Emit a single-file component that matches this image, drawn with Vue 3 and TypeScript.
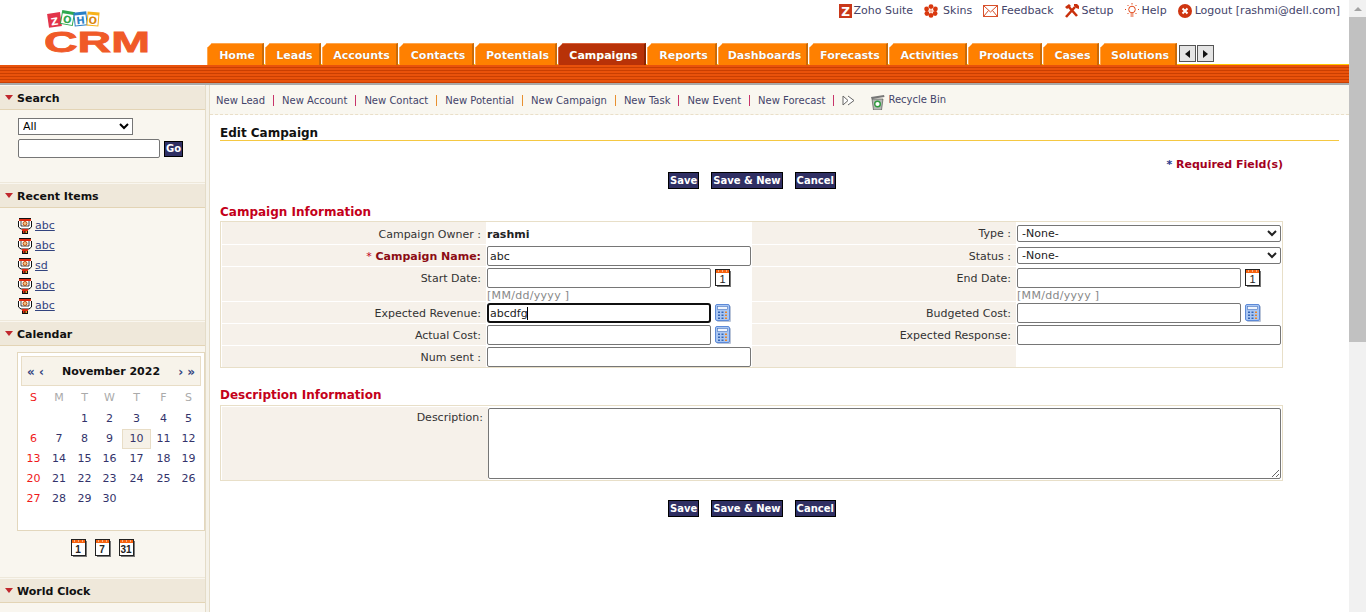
<script setup lang="ts">
interface Tab {
    label: string;
    width: number;
    active?: boolean;
}

const tabs: Tab[] = [
    { label: "Home", width: 57 },
    { label: "Leads", width: 56 },
    { label: "Accounts", width: 76 },
    { label: "Contacts", width: 75 },
    { label: "Potentials", width: 82 },
    { label: "Campaigns", width: 88, active: true },
    { label: "Reports", width: 70 },
    { label: "Dashboards", width: 90 },
    { label: "Forecasts", width: 79 },
    { label: "Activities", width: 78 },
    { label: "Products", width: 74 },
    { label: "Cases", width: 56 },
    { label: "Solutions", width: 77 },
];

const quickLinks = [
    "New Lead",
    "New Account",
    "New Contact",
    "New Potential",
    "New Campaign",
    "New Task",
    "New Event",
    "New Forecast",
];

const recentItems = ["abc", "abc", "sd", "abc", "abc"];
const weekDays = ["S", "M", "T", "W", "T", "F", "S"];
const blanks = [0, 1];
const days = Array.from({ length: 30 }, (_, i) => i + 1);

// november 2022: the 6th is the first sunday
const isSunday = (day: number) => day % 7 === 6;
</script>

<template>
    <div class="page">
        <svg class="sprites" width="0" height="0" aria-hidden="true">
            <symbol id="cal" viewBox="0 0 16 18">
                <rect x="2" y="2" width="14" height="16" fill="#777" />
                <rect x="0.5" y="0.5" width="14" height="16" fill="#fff" stroke="#222" />
                <rect x="1" y="1" width="13" height="3" fill="#f5620f" />
                <path d="M3 2h1M7 2h1M11 2h1" stroke="#fff" />
            </symbol>
            <symbol id="calc" viewBox="0 0 16 18">
                <rect x="2" y="2" width="14" height="16" rx="1" fill="#b9c4d8" />
                <rect x="0.5" y="0.5" width="14" height="16" rx="1.5" fill="#a9c6f2" stroke="#5d8ad8" />
                <rect x="2.5" y="2.5" width="10" height="3" fill="#f0f5fd" stroke="#4a74bc" stroke-width="0.6" />
                <g fill="#3564b4">
                    <rect x="3" y="7.5" width="2" height="1.5" />
                    <rect x="6.500" y="7.5" width="2" height="1.5" />
                    <rect x="10" y="7.5" width="2" height="1.5" fill="#e8862a" />
                    <rect x="3" y="10.500" width="2" height="1.5" />
                    <rect x="6.500" y="10.500" width="2" height="1.5" />
                    <rect x="10" y="10.500" width="2" height="1.5" fill="#e8862a" />
                    <rect x="3" y="13.500" width="2" height="1.5" />
                    <rect x="6.500" y="13.500" width="2" height="1.5" />
                    <rect x="10" y="13.500" width="2" height="1.5" fill="#e8862a" />
                </g>
            </symbol>
            <symbol id="campaign" viewBox="0 0 14 16">
                <rect x="1" y="0" width="12" height="1" fill="#111" />
                <rect x="1" y="1" width="12" height="2" fill="#e02a10" />
                <path d="M.5 3v6l2.500 2h8l2.500-2V3" fill="#fff" stroke="#111" />
                <path d="M3 3v5h8V3" fill="#fff" stroke="#111" stroke-width="0.8" />
                <circle cx="7" cy="5.500" r="2" fill="#f3c48a" stroke="#b8500c" stroke-width="1" />
                <rect x="4" y="11" width="6" height="2" fill="#e02a10" />
                <rect x="4" y="13" width="6" height="3" fill="#111" />
                <rect x="5" y="13" width="1.5" height="2" fill="#e02a10" />
                <rect x="7.5" y="13" width="1.5" height="2" fill="#e8a020" />
            </symbol>
        </svg>

        <div class="window">
            <header class="header">
                <div class="logo">
                    <svg width="110" height="65" viewBox="0 0 110 65">
                        <g class="cube-text" text-anchor="middle">
                            <g transform="rotate(-8 9 20)">
                                <rect x="3" y="13" width="13" height="14" fill="#e2344a" />
                                <text x="9.500" y="25" fill="#fff">Z</text>
                            </g>
                            <g transform="rotate(10 22 18)">
                                <rect x="16" y="11" width="13" height="14" fill="#2fa84f" />
                                <rect x="17" y="14" width="11" height="10" fill="#fff" />
                                <text x="22.500" y="23" fill="#2fa84f">O</text>
                            </g>
                            <g transform="rotate(-6 35 19)">
                                <rect x="29" y="12" width="13" height="14" fill="#2a7fc6" />
                                <rect x="30" y="15" width="11" height="10" fill="#fff" />
                                <text x="35.500" y="24" fill="#2a7fc6">H</text>
                            </g>
                            <g transform="rotate(5 48 19)">
                                <rect x="42" y="12" width="12" height="14" fill="#f7b21c" />
                                <rect x="43" y="15" width="10" height="10" fill="#fff" />
                                <text x="48" y="24" fill="#d9860c">O</text>
                            </g>
                        </g>
                        <text
                            class="crm-text"
                            x="-1"
                            y="52"
                            textLength="106"
                            lengthAdjust="spacingAndGlyphs"
                        >CRM</text>
                    </svg>
                </div>
                <div class="header-right">
                    <nav class="top-links">
                        <a class="top-link top-link--suite">
                            <svg width="13" height="14" viewBox="0 0 13 14">
                                <rect width="13" height="14" fill="#c9381a" />
                                <text class="suite-z" x="6.5" y="12" text-anchor="middle">Z</text>
                            </svg>
                            Zoho Suite
                        </a>
                        <a class="top-link top-link--skins">
                            <svg width="14" height="14" viewBox="0 0 14 14">
                                <g fill="#d9380e">
                                    <circle cx="7" cy="2.6" r="2.4" />
                                    <circle cx="7" cy="11.4" r="2.4" />
                                    <circle cx="2.6" cy="5" r="2.4" />
                                    <circle cx="11.4" cy="5" r="2.4" />
                                    <circle cx="2.9" cy="9.5" r="2.4" />
                                    <circle cx="11.1" cy="9.5" r="2.4" />
                                </g>
                                <circle cx="7" cy="7" r="1.7" fill="#f6b49a" />
                            </svg>
                            Skins
                        </a>
                        <a class="top-link">
                            <svg width="15" height="12" viewBox="0 0 15 12">
                                <rect x="0.5" y="0.5" width="14" height="11" fill="#fff" stroke="#d8502a" />
                                <path d="M1 1l6.5 6L14 1M1 11l4.5-5.5M14 11L9.500 5.500" fill="none" stroke="#d8502a" />
                            </svg>
                            Feedback
                        </a>
                        <a class="top-link">
                            <svg width="14" height="14" viewBox="0 0 14 14">
                                <path d="M1 13L10 3M3 2l9 10" stroke="#c9300c" stroke-width="2.600" fill="none" />
                                <path d="M0 3l4-3 2 2-4 3zM9 0h3l2 2v3l-3-1-2-2z" fill="#c9300c" />
                            </svg>
                            Setup
                        </a>
                        <a class="top-link">
                            <svg width="14" height="16" viewBox="0 0 14 16">
                                <circle cx="7" cy="6.500" r="3.300" fill="#fff" stroke="#e2491a" />
                                <path d="M5.500 11h3M5.500 13h3M7 0v1.500M1 6.500H0M14 6.500h-1M2.500 2l1 1M11.500 2l-1 1M2.500 11l1-1M11.500 11l-1-1" stroke="#e2491a" fill="none" />
                            </svg>
                            Help
                        </a>
                        <a class="top-link">
                            <svg width="14" height="14" viewBox="0 0 14 14">
                                <circle cx="7" cy="7" r="7" fill="#cf3510" />
                                <path d="M4.500 4.500l5 5M9.500 4.500l-5 5" stroke="#fff" stroke-width="2" />
                            </svg>
                            Logout [rashmi@dell.com]
                        </a>
                    </nav>
                    <div class="tabs">
                        <a
                            v-for="tab in tabs"
                            :key="tab.label"
                            class="tab"
                            :class="{ 'tab--active': tab.active }"
                            :style="{ width: tab.width + 'px' }"
                        >{{ tab.label }}</a>
                        <span class="tab-arrow tab-arrow--first"><i class="tri tri--left"></i></span>
                        <span class="tab-arrow"><i class="tri tri--right"></i></span>
                    </div>
                </div>
            </header>
            <div class="stripe"></div>

            <div class="body">
                <aside class="sidebar">
                    <section class="side-section">
                        <h3 class="side-head"><i class="caret"></i>Search</h3>
                        <div class="search-body">
                            <select class="search-select"><option>All</option></select>
                            <div class="search-row">
                                <input class="search-input" type="text" />
                                <button class="btn btn--go">Go</button>
                            </div>
                        </div>
                    </section>

                    <section class="side-section">
                        <h3 class="side-head"><i class="caret"></i>Recent Items</h3>
                        <ul class="recent">
                            <li v-for="(item, i) in recentItems" :key="i" class="recent-item">
                                <svg width="14" height="16"><use href="#campaign" /></svg>
                                <a class="recent-link">{{ item }}</a>
                            </li>
                        </ul>
                    </section>

                    <section class="side-section">
                        <h3 class="side-head"><i class="caret"></i>Calendar</h3>
                        <div class="cal-wrap">
                            <div class="cal">
                                <div class="cal-title">
                                    <span class="cal-nav">« ‹</span>
                                    <b class="cal-month">November 2022</b>
                                    <span class="cal-nav">› »</span>
                                </div>
                                <div class="cal-grid">
                                    <span
                                        v-for="(d, i) in weekDays"
                                        :key="'w' + i"
                                        class="cal-week"
                                        :class="{ 'cal-week--sun': i === 0 }"
                                    >{{ d }}</span>
                                    <span v-for="b in blanks" :key="'b' + b"></span>
                                    <span
                                        v-for="day in days"
                                        :key="day"
                                        class="cal-day"
                                        :class="{ 'cal-day--sun': isSunday(day), 'cal-day--today': day === 10 }"
                                    >{{ day }}</span>
                                </div>
                            </div>
                            <div class="cal-views">
                                <span v-for="n in [1, 7, 31]" :key="n" class="cal-icon cal-icon--view">
                                    <svg width="16" height="18"><use href="#cal" /></svg>
                                    <em>{{ n }}</em>
                                </span>
                            </div>
                        </div>
                    </section>

                    <section class="side-section side-section--last">
                        <h3 class="side-head"><i class="caret"></i>World Clock</h3>
                    </section>
                </aside>
                <div class="rule"></div>

                <main class="main">
                    <nav class="quick">
                        <template v-for="(link, i) in quickLinks" :key="link">
                            <a class="quick-link">{{ link }}</a>
                            <i class="quick-sep" :class="{ 'quick-sep--warm': i > 1 && i < 5 }"></i>
                        </template>
                        <svg class="quick-more" width="13" height="11" viewBox="0 0 13 11">
                            <path d="M1 1l5 4.500-5 4.500zM6 1l6 4.500-6 4.500" fill="#fff" stroke="#666" />
                        </svg>
                        <svg class="quick-bin" width="15" height="16" viewBox="0 0 15 16">
                            <path d="M1 3l13-2 .5 2-13 2z" fill="#777" />
                            <path d="M2 5h11l-1.500 11h-8z" fill="#b4b8b4" stroke="#444" stroke-width="0.600" />
                            <circle cx="7.500" cy="10" r="2.800" fill="#fff" stroke="#2e9a3c" stroke-width="1.400" />
                        </svg>
                        <a class="quick-link quick-link--bin">Recycle Bin</a>
                    </nav>

                    <div class="content">
                        <h2 class="title">Edit Campaign</h2>
                        <div class="required"><span class="req-star">*</span> Required Field(s)</div>
                        <div class="actions">
                            <button class="btn">Save</button>
                            <button class="btn">Save &amp; New</button>
                            <button class="btn">Cancel</button>
                        </div>

                        <h3 class="block-head">Campaign Information</h3>
                        <div class="form-table">
                            <label class="cell-label cell-label--owner">Campaign Owner :</label>
                            <div class="cell-value cell-value--owner"><b>rashmi</b></div>
                            <label class="cell-label">Type :</label>
                            <div class="cell-value cell-value--type"><select class="field"><option>-None-</option></select></div>

                            <label class="cell-label cell-label--required"><span>*</span> Campaign Name:</label>
                            <div class="cell-value"><input class="field" type="text" value="abc" /></div>
                            <label class="cell-label">Status :</label>
                            <div class="cell-value cell-value--status"><select class="field"><option>-None-</option></select></div>

                            <label class="cell-label">Start Date:</label>
                            <div class="cell-value">
                                <div class="with-icon">
                                    <input class="field field--short" type="text" />
                                    <span class="cal-icon">
                                        <svg width="16" height="18"><use href="#cal" /></svg>
                                        <em>1</em>
                                    </span>
                                </div>
                                <div class="hint">[MM/dd/yyyy ]</div>
                            </div>
                            <label class="cell-label">End Date:</label>
                            <div class="cell-value">
                                <div class="with-icon">
                                    <input class="field field--short" type="text" />
                                    <span class="cal-icon">
                                        <svg width="16" height="18"><use href="#cal" /></svg>
                                        <em>1</em>
                                    </span>
                                </div>
                                <div class="hint">[MM/dd/yyyy ]</div>
                            </div>

                            <label class="cell-label">Expected Revenue:</label>
                            <div class="cell-value">
                                <div class="with-icon">
                                    <span class="focus-wrap">
                                        <input class="field field--short field--focus" type="text" value="abcdfg" />
                                        <i class="text-caret"></i>
                                    </span>
                                    <svg width="16" height="18"><use href="#calc" /></svg>
                                </div>
                            </div>
                            <label class="cell-label">Budgeted Cost:</label>
                            <div class="cell-value">
                                <div class="with-icon">
                                    <input class="field field--short" type="text" />
                                    <svg width="16" height="18"><use href="#calc" /></svg>
                                </div>
                            </div>

                            <label class="cell-label">Actual Cost:</label>
                            <div class="cell-value">
                                <div class="with-icon">
                                    <input class="field field--short" type="text" />
                                    <svg width="16" height="18"><use href="#calc" /></svg>
                                </div>
                            </div>
                            <label class="cell-label">Expected Response:</label>
                            <div class="cell-value"><input class="field" type="text" /></div>

                            <label class="cell-label">Num sent :</label>
                            <div class="cell-value"><input class="field" type="text" /></div>
                            <div class="cell-label"></div>
                            <div class="cell-value"></div>
                        </div>

                        <h3 class="block-head block-head--desc">Description Information</h3>
                        <div class="desc-table">
                            <label class="cell-label cell-label--desc">Description:</label>
                            <div class="desc-value"><textarea class="desc-area"></textarea></div>
                        </div>

                        <div class="actions actions--bottom">
                            <button class="btn">Save</button>
                            <button class="btn">Save &amp; New</button>
                            <button class="btn">Cancel</button>
                        </div>
                    </div>
                </main>
            </div>
        </div>

        <div class="scrollbar">
            <div class="scroll-btn"><i class="scroll-up"></i></div>
            <div class="scroll-thumb"></div>
        </div>
    </div>
</template>

<style>
html,
body {
    margin: 0;
    overflow: hidden;
    background: #fff;
}
</style>

<style scoped>
.page {
    display: flex;
    width: 1366px;
    height: 612px;
    overflow: hidden;
    font: 11px/14px "DejaVu Sans", Verdana, sans-serif;
    color: #333;
}

.sprites {
    position: absolute;
}

.window {
    width: 1349px;
    display: flex;
    flex-direction: column;
}

/* header */
.header {
    display: flex;
    height: 65px;
}

.logo {
    width: 207px;
    padding: 0 0 0 45px;
    box-sizing: border-box;
}

.logo svg {
    display: block;
}

.cube-text {
    font: bold 10px "DejaVu Sans", sans-serif;
}

.crm-text {
    font: bold 30px "Liberation Sans", sans-serif;
    fill: #f05a28;
    stroke: #f05a28;
    stroke-width: 0.8px;
}

.header-right {
    flex: 1;
    display: flex;
    flex-direction: column;
    justify-content: space-between;
}

.top-links {
    display: flex;
    justify-content: flex-end;
    gap: 11px;
    padding: 4px 9px 0 0;
    color: #44446a;
}

.top-link {
    display: flex;
    align-items: center;
    gap: 3px;
    height: 14px;
    white-space: nowrap;
}

.top-link--suite {
    gap: 1px;
}

.top-link--skins {
    gap: 5px;
}

.suite-z {
    font: bold 12px "DejaVu Sans", sans-serif;
    fill: #fff;
}

.tabs {
    display: flex;
    height: 22px;
    background: linear-gradient(#ffc600, #ffc600) bottom / 100% 1px no-repeat;
}

.tab {
    margin-right: 1px;
    box-sizing: border-box;
    height: 22px;
    padding-left: 4px;
    line-height: 24px;
    text-align: center;
    font-weight: bold;
    color: #fff;
    background: #ff8000;
    border-top: 1px solid #ffa64d;
    border-left: 1px solid #ffa64d;
    border-right: 2px solid #c96a08;
    clip-path: polygon(5px 0, 100% 0, 100% 100%, 0 100%, 0 5px);
    text-shadow: 0 0 1px #a85000;
}

.tab--active {
    background: #b83208;
    border-top-color: #d8603a;
    border-left-color: #d8603a;
    border-right-color: #8a2400;
}

.tab-arrow {
    width: 17px;
    height: 17px;
    box-sizing: border-box;
    background: #e4e4e4;
    border: 1px solid #555;
    display: flex;
    align-items: center;
    justify-content: center;
}

.tab-arrow--first {
    margin: 2px 1px 0 1px;
}

.tab-arrow:last-child {
    margin-top: 2px;
}

.tri {
    width: 0;
    height: 0;
    border-top: 4px solid transparent;
    border-bottom: 4px solid transparent;
}

.tri--left {
    border-right: 5px solid #111;
}

.tri--right {
    border-left: 5px solid #111;
}

.stripe {
    height: 18px;
    background: repeating-linear-gradient(#e9520b 0 2px, #c93f02 2px 3px);
    border-bottom: 2px solid #a9a9a9;
    box-sizing: content-box;
}

.body {
    flex: 1;
    display: flex;
    min-height: 0;
}

/* sidebar */
.sidebar {
    width: 205px;
    background: #f9f6ef;
    padding-top: 1px;
}

.rule {
    width: 3px;
    background: #f5f2ea;
    border-left: 1px solid #e4dcc8;
    border-right: 1px solid #e4dcc8;
}

.side-section {
    border-bottom: 1px solid #eee8da;
    margin-bottom: 1px;
}

.side-section--last {
    border-bottom: 0;
}

.side-head {
    margin: 0;
    height: 21px;
    padding-top: 2px;
    background: #efe8da;
    border-bottom: 1px solid #e3d4b5;
    font: bold 11px/21px "DejaVu Sans", sans-serif;
    color: #111;
    display: flex;
    align-items: center;
}

.caret {
    width: 0;
    height: 0;
    margin: -2px 4px 0 5px;
    border-left: 4px solid transparent;
    border-right: 4px solid transparent;
    border-top: 5px solid #c0272d;
}

.search-body {
    height: 72px;
    padding: 8px 0 0 18px;
    box-sizing: border-box;
}

.search-select {
    display: block;
    width: 115px;
    height: 17px;
    padding: 0;
    font: 11px "DejaVu Sans", sans-serif;
    background: #fff;
}

.search-row {
    display: flex;
    align-items: center;
    gap: 4px;
    margin-top: 4px;
}

.search-input {
    width: 142px;
    height: 19px;
    box-sizing: border-box;
    padding: 1px 2px;
    border: 1px solid #767676;
    border-radius: 2px;
}

.recent {
    list-style: none;
    margin: 0;
    padding: 8px 0 4px 18px;
}

.recent-item {
    height: 20px;
    display: flex;
    align-items: center;
    gap: 3px;
}

.recent-link {
    color: #33447f;
    text-decoration: underline;
}

.cal-wrap {
    height: 231px;
    padding: 6px 0 0 17px;
    box-sizing: border-box;
}

.cal {
    width: 188px;
    height: 179px;
    box-sizing: border-box;
    background: #fff;
    border: 1px solid #e3d7bd;
    padding: 3px 3px 0;
}

.cal-title {
    height: 30px;
    box-sizing: border-box;
    background: #f7f3ea;
    border: 1px solid #e8ddc6;
    display: flex;
    align-items: center;
    justify-content: space-between;
    padding: 1px 5px 0;
}

.cal-nav {
    color: #33447f;
    font-weight: bold;
    font-size: 12px;
}

.cal-month {
    color: #111;
    font-size: 11px;
}

.cal-grid {
    display: grid;
    grid-template-columns: 25px 26px 25px 25px 29px 25px 25px;
    grid-template-rows: 21px;
    grid-auto-rows: 20px;
    margin-top: 2px;
    text-align: center;
    line-height: 20px;
}

.cal-week {
    color: #aaa;
}

.cal-week--sun,
.cal-day--sun {
    color: #f01a1a;
}

.cal-day {
    color: #33336b;
    box-sizing: border-box;
}

.cal-day--sun {
    color: #f01a1a;
}

.cal-day--today {
    background: #f6f1e7;
    border: 1px solid #e8ddc6;
    line-height: 18px;
}

.cal-views {
    display: flex;
    justify-content: center;
    gap: 8px;
    margin-top: 8px;
    padding-right: 17px;
}

.cal-icon {
    position: relative;
    display: inline-block;
    width: 16px;
    height: 18px;
}

.cal-icon em {
    position: absolute;
    left: 0;
    width: 15px;
    top: 4px;
    text-align: center;
    font: normal 11px/13px "Liberation Sans", sans-serif;
    color: #222;
}

.cal-icon--view em {
    font-weight: bold;
    font-size: 10px;
}

/* main */
.main {
    flex: 1;
    min-width: 0;
    background: #fff;
}

.quick {
    height: 27px;
    padding: 2px 0 0 6px;
    background: #f9f7f0;
    border-bottom: 1px dashed #eadfc8;
    display: flex;
    align-items: center;
    font-size: 10px;
    color: #44446a;
}

.quick-sep {
    width: 1px;
    height: 11px;
    margin: 0 8px;
    background: #c8346a;
}

.quick-sep--warm {
    background: #e89030;
}

.quick-more {
    margin-right: 15px;
}

.quick-bin {
    margin: 2px 3px 0 0;
}

.quick-link--bin {
    margin-top: -2px;
}

.content {
    padding: 9px 10px 0;
}

.title {
    margin: 0;
    height: 16px;
    font: bold 12px/18px "DejaVu Sans", sans-serif;
    color: #111;
    border-bottom: 1px solid #f5c842;
}

.required {
    margin: 17px 56px 0 0;
    text-align: right;
    font-weight: bold;
    color: #a3001e;
}

.req-star {
    color: #2a3a8a;
}

.actions {
    display: flex;
    gap: 12px;
    margin: 0 0 0 448px;
    height: 17px;
}

.btn {
    box-sizing: border-box;
    height: 17px;
    padding: 0 1px;
    font: bold 10px/13px "DejaVu Sans", sans-serif;
    color: #fff;
    background: #2f2f63;
    border: 1px solid #000;
    border-radius: 0;
}

.btn--go {
    width: 19px;
    height: 16px;
    padding: 0;
}

.block-head {
    margin: 15px 0 2px;
    height: 15px;
    font: bold 12px/17px "DejaVu Sans", sans-serif;
    color: #c4001a;
}

.block-head--desc {
    margin: 19px 0 3px;
}

.form-table {
    width: 1063px;
    box-sizing: border-box;
    border: 1px solid #e8dfc8;
    padding-left: 1px;
    display: grid;
    grid-template-columns: 264px 266px 264px 266px;
    grid-template-rows: 22px 21px 34px 21px 21px 21px;
    row-gap: 1px;
    background: #fff;
}

.cell-label {
    background: #f6f1ea;
    text-align: right;
    padding-right: 5px;
    line-height: 24px;
    color: #333;
}

.cell-label--owner {
    line-height: 26px;
}

.cell-label--required {
    font-weight: bold;
    color: #8c0c14;
}

.cell-label--required span {
    font-weight: normal;
    color: #c4001a;
}

.cell-label--desc {
    line-height: 14px;
    padding-top: 4px;
}

.cell-value {
    padding: 1px 0 0 1px;
    min-width: 0;
}

.cell-value--owner {
    line-height: 26px;
    padding-top: 0;
    color: #222;
}

.cell-value--type {
    padding-top: 3px;
}

.cell-value--status {
    padding-top: 2px;
}

.field {
    display: block;
    box-sizing: border-box;
    width: 264px;
    height: 20px;
    padding: 1px 2px;
    border: 1px solid #767676;
    border-radius: 2px;
    background: #fff;
    font: 11px "DejaVu Sans", sans-serif;
    color: #222;
}

select.field {
    height: 17px;
    padding: 0;
}

.field--short {
    width: 224px;
}

.field--focus {
    border: 2px solid #101010;
    border-radius: 3px;
    padding: 0 1px;
    outline: 0;
}

.focus-wrap {
    position: relative;
    display: block;
}

.text-caret {
    position: absolute;
    left: 40px;
    top: 4px;
    width: 1px;
    height: 13px;
    background: #000;
}

.with-icon {
    display: flex;
    align-items: center;
    gap: 4px;
}

.hint {
    margin-top: 1px;
    color: #888;
    line-height: 14px;
    letter-spacing: 0.3px;
}

.desc-table {
    width: 1063px;
    height: 76px;
    box-sizing: border-box;
    border: 1px solid #e8dfc8;
    padding: 1px;
    display: grid;
    grid-template-columns: 266px 1fr;
}

.desc-value {
    padding: 1px 0;
}

.desc-area {
    display: block;
    width: 793px;
    height: 71px;
    box-sizing: border-box;
    margin: 0;
    padding: 2px;
    border: 1px solid #767676;
    border-radius: 2px;
}

.actions--bottom {
    margin-top: 19px;
}

/* fake window scrollbar */
.scrollbar {
    width: 17px;
    background: #f1f1f1;
}

.scroll-btn {
    height: 17px;
    display: flex;
    align-items: center;
    justify-content: center;
}

.scroll-up {
    width: 0;
    height: 0;
    border-left: 4px solid transparent;
    border-right: 4px solid transparent;
    border-bottom: 4px solid #a3a3a3;
}

.scroll-thumb {
    height: 325px;
    background: #c1c1c1;
}
</style>
